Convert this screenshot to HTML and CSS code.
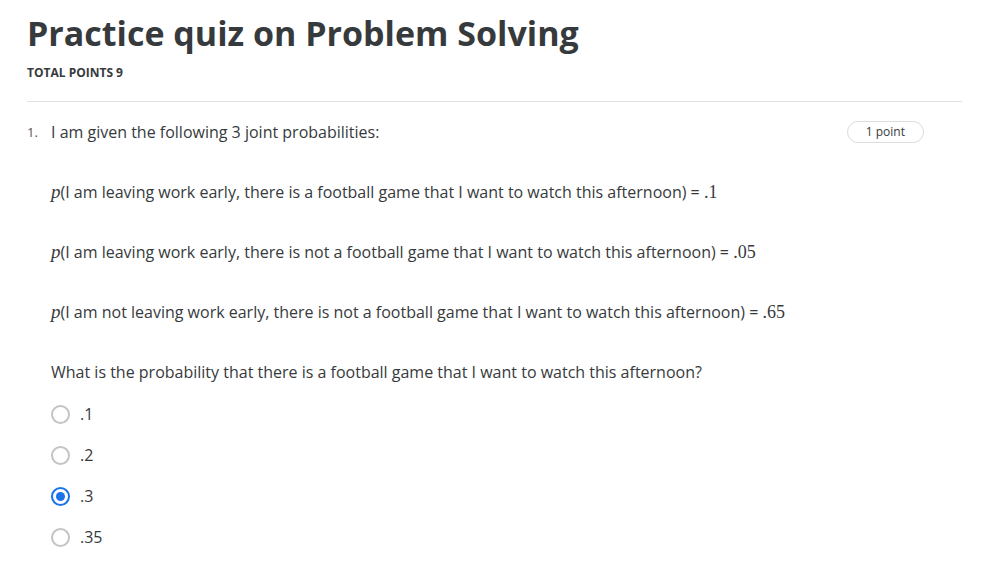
FILE: index.html
```html
<!DOCTYPE html>
<html>
<head>
<meta charset="utf-8">
<link rel="stylesheet" href="styles.css">
</head>
<body>
<div class="page">
  <h1 class="title">Practice quiz on Problem Solving</h1>
  <div class="total">TOTAL POINTS 9</div>
  <hr class="sep">
  <div class="question">
    <div class="qnum">1.</div>
    <div class="qbody">
      <div class="qhead">
        <p class="qtext">I am given the following 3 joint probabilities:</p>
        <span class="pill">1 point</span>
      </div>
      <p class="line"><span class="math">p</span>(I am leaving work early, there is a football game that I want to watch this afternoon) = <span class="num">.1</span></p>
      <p class="line"><span class="math">p</span>(I am leaving work early, there is not a football game that I want to watch this afternoon) = <span class="num">.05</span></p>
      <p class="line"><span class="math">p</span>(I am not leaving work early, there is not a football game that I want to watch this afternoon) = <span class="num">.65</span></p>
      <p class="line">What is the probability that there is a football game that I want to watch this afternoon?</p>
      <div class="options">
        <div class="opt"><span class="radio"></span><span class="olabel">.1</span></div>
        <div class="opt"><span class="radio"></span><span class="olabel">.2</span></div>
        <div class="opt"><span class="radio checked"></span><span class="olabel">.3</span></div>
        <div class="opt"><span class="radio"></span><span class="olabel">.35</span></div>
      </div>
    </div>
  </div>
</div>
</body>
</html>
```
FILE: styles.css
```css
html, body {
  margin: 0;
  padding: 0;
  background: #ffffff;
}
body {
  font-family: "Open Sans", "Liberation Sans", sans-serif;
  color: #373a3c;
}
.page {
  padding: 10px 27px 0 27px;
}
.title {
  margin: 0;
  font-size: 34px;
  font-weight: 700;
  line-height: 46px;
  color: #373a3c;
}
.total {
  margin-top: 10px;
  font-size: 12px;
  font-weight: 700;
  line-height: 14px;
  color: #373a3c;
}
.sep {
  border: 0;
  border-top: 1px solid #e1e1e1;
  margin: 21px 0 0 0;
}
.question {
  display: flex;
  margin-top: 19px;
}
.qnum {
  width: 24px;
  font-size: 13px;
  line-height: 22px;
  color: #555;
}
.qbody {
  flex: 1;
}
.qhead {
  display: flex;
  justify-content: space-between;
  align-items: center;
  padding-right: 38px;
}
.qtext, .line {
  margin: 0;
  font-size: 16px;
  line-height: 22px;
}
.line {
  margin-top: 38px;
}
.pill {
  font-size: 12px;
  line-height: 20px;
  padding: 0 18px;
  border: 1px solid #dcdcdc;
  border-radius: 12px;
  color: #373a3c;
}
.math {
  font-family: "Liberation Serif", "DejaVu Serif", serif;
  font-style: italic;
  font-size: 19px;
}
.num {
  font-family: "Liberation Serif", "DejaVu Serif", serif;
  font-size: 18px;
}
.options {
  margin-top: 20px;
  display: flex;
  flex-direction: column;
  gap: 19px;
}
.opt {
  display: flex;
  align-items: center;
  gap: 10px;
  height: 22px;
}
.radio {
  box-sizing: border-box;
  width: 19px;
  height: 19px;
  border: 2px solid #c4c4c4;
  border-radius: 50%;
  position: relative;
}
.radio.checked {
  border-color: #1a73e8;
}
.radio.checked::after {
  content: "";
  position: absolute;
  left: 3px;
  top: 3px;
  width: 9px;
  height: 9px;
  border-radius: 50%;
  background: #1a73e8;
}
.olabel {
  font-size: 16px;
  line-height: 22px;
}
```
